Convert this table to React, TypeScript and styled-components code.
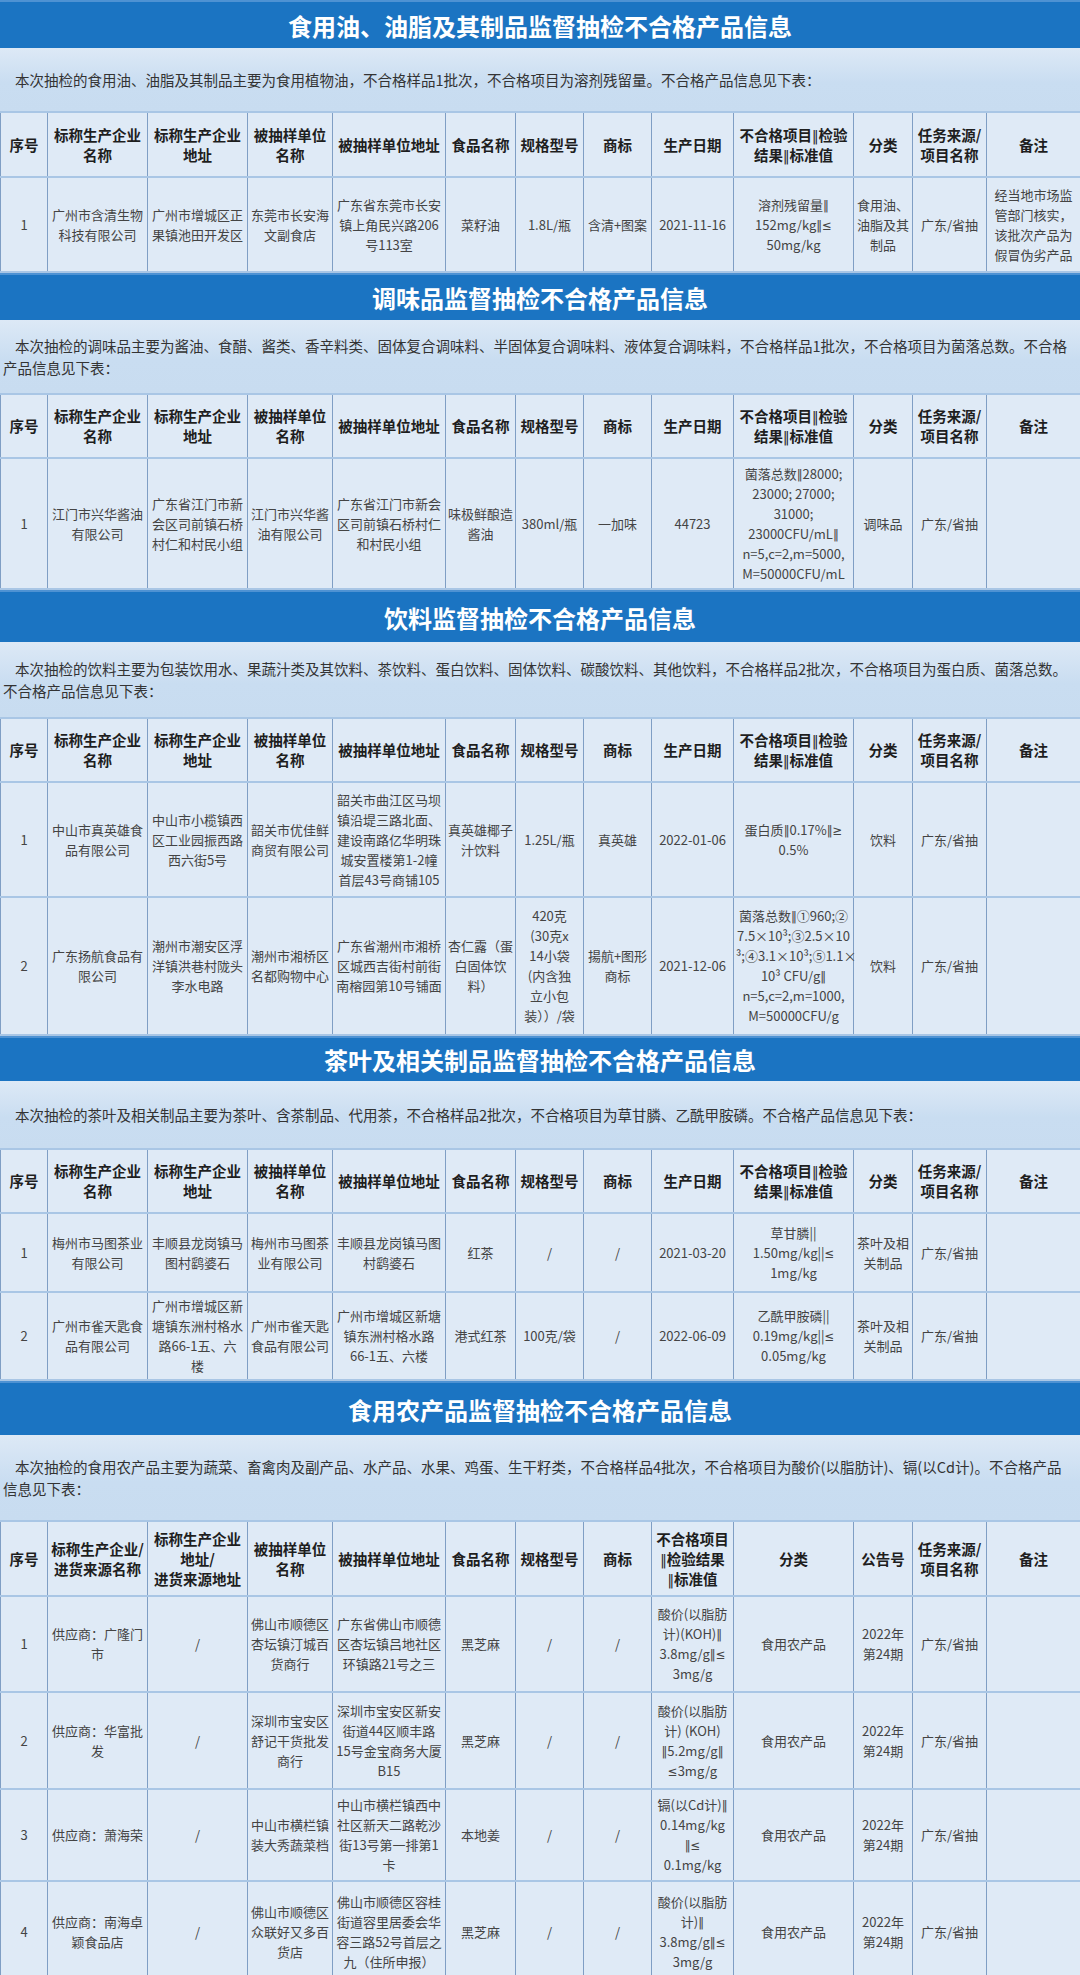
import styled, { createGlobalStyle } from 'styled-components';

const GlobalStyle = createGlobalStyle`
  html, body {
    margin: 0;
    padding: 0;
    background: #dfeaf6;
  }
  body {
    font-family: "Noto Sans CJK SC", "Noto Sans", sans-serif;
  }
`;

const COLS = [47, 100, 100, 85, 113, 70, 68, 68, 82, 120, 59, 74, 94];

const HEAD = [
  '序号',
  '标称生产企业\n名称',
  '标称生产企业\n地址',
  '被抽样单位\n名称',
  '被抽样单位地址',
  '食品名称',
  '规格型号',
  '商标',
  '生产日期',
  '不合格项目‖检验\n结果‖标准值',
  '分类',
  '任务来源/\n项目名称',
  '备注',
];

const HEAD_FARM = [
  '序号',
  '标称生产企业/\n进货来源名称',
  '标称生产企业\n地址/\n进货来源地址',
  '被抽样单位\n名称',
  '被抽样单位地址',
  '食品名称',
  '规格型号',
  '商标',
  '不合格项目\n‖检验结果\n‖标准值',
  '分类',
  '公告号',
  '任务来源/\n项目名称',
  '备注',
];

interface Section {
  title: string;
  titleH: number;
  intro: string[];
  introH: number;
  head: string[];
  headH: number;
  rows: { h: number; cells: string[] }[];
}

const SECTIONS: Section[] = [
  {
    title: '食用油、油脂及其制品监督抽检不合格产品信息',
    titleH: 48,
    intro: [
      '本次抽检的食用油、油脂及其制品主要为食用植物油，不合格样品1批次，不合格项目为溶剂残留量。不合格产品信息见下表：',
    ],
    introH: 63,
    head: HEAD,
    headH: 65,
    rows: [
      {
        h: 95,
        cells: [
          '1',
          '广州市含清生物\n科技有限公司',
          '广州市增城区正\n果镇池田开发区',
          '东莞市长安海\n文副食店',
          '广东省东莞市长安\n镇上角民兴路206\n号113室',
          '菜籽油',
          '1.8L/瓶',
          '含清+图案',
          '2021-11-16',
          '溶剂残留量‖\n152mg/kg‖≤\n50mg/kg',
          '食用油、\n油脂及其\n制品',
          '广东/省抽',
          '经当地市场监\n管部门核实，\n该批次产品为\n假冒伪劣产品',
        ],
      },
    ],
  },
  {
    title: '调味品监督抽检不合格产品信息',
    titleH: 47,
    intro: [
      '本次抽检的调味品主要为酱油、食醋、酱类、香辛料类、固体复合调味料、半固体复合调味料、液体复合调味料，不合格样品1批次，不合格项目为菌落总数。不合格',
      '产品信息见下表：',
    ],
    introH: 73,
    head: HEAD,
    headH: 64,
    rows: [
      {
        h: 131,
        cells: [
          '1',
          '江门市兴华酱油\n有限公司',
          '广东省江门市新\n会区司前镇石桥\n村仁和村民小组',
          '江门市兴华酱\n油有限公司',
          '广东省江门市新会\n区司前镇石桥村仁\n和村民小组',
          '味极鲜酿造\n酱油',
          '380ml/瓶',
          '一加味',
          '44723',
          '菌落总数‖28000;\n23000; 27000;\n31000;\n23000CFU/mL‖\nn=5,c=2,m=5000,\nM=50000CFU/mL',
          '调味品',
          '广东/省抽',
          '',
        ],
      },
    ],
  },
  {
    title: '饮料监督抽检不合格产品信息',
    titleH: 52,
    intro: [
      '本次抽检的饮料主要为包装饮用水、果蔬汁类及其饮料、茶饮料、蛋白饮料、固体饮料、碳酸饮料、其他饮料，不合格样品2批次，不合格项目为蛋白质、菌落总数。',
      '不合格产品信息见下表：',
    ],
    introH: 75,
    head: HEAD,
    headH: 64,
    rows: [
      {
        h: 115,
        cells: [
          '1',
          '中山市真英雄食\n品有限公司',
          '中山市小榄镇西\n区工业园振西路\n西六街5号',
          '韶关市优佳鲜\n商贸有限公司',
          '韶关市曲江区马坝\n镇沿堤三路北面、\n建设南路亿华明珠\n城安置楼第1-2幢\n首层43号商铺105',
          '真英雄椰子\n汁饮料',
          '1.25L/瓶',
          '真英雄',
          '2022-01-06',
          '蛋白质‖0.17%‖≥\n0.5%',
          '饮料',
          '广东/省抽',
          '',
        ],
      },
      {
        h: 138,
        cells: [
          '2',
          '广东扬航食品有\n限公司',
          '潮州市潮安区浮\n洋镇洪巷村陇头\n李水电路',
          '潮州市湘桥区\n名都购物中心',
          '广东省潮州市湘桥\n区城西吉街村前街\n南榕园第10号铺面',
          '杏仁露（蛋\n白固体饮\n料）',
          '420克\n(30克x\n14小袋\n(内含独\n立小包\n装））/袋',
          '揚航+图形\n商标',
          '2021-12-06',
          '菌落总数‖①960;②\n7.5×10³;③2.5×10\n³;④3.1×10³;⑤1.1×\n10³ CFU/g‖\nn=5,c=2,m=1000,\nM=50000CFU/g',
          '饮料',
          '广东/省抽',
          '',
        ],
      },
    ],
  },
  {
    title: '茶叶及相关制品监督抽检不合格产品信息',
    titleH: 45,
    intro: [
      '本次抽检的茶叶及相关制品主要为茶叶、含茶制品、代用茶，不合格样品2批次，不合格项目为草甘膦、乙酰甲胺磷。不合格产品信息见下表：',
    ],
    introH: 67,
    head: HEAD,
    headH: 64,
    rows: [
      {
        h: 79,
        cells: [
          '1',
          '梅州市马图茶业\n有限公司',
          '丰顺县龙岗镇马\n图村鹞婆石',
          '梅州市马图茶\n业有限公司',
          '丰顺县龙岗镇马图\n村鹞婆石',
          '红茶',
          '/',
          '/',
          '2021-03-20',
          '草甘膦||\n1.50mg/kg||≤\n1mg/kg',
          '茶叶及相\n关制品',
          '广东/省抽',
          '',
        ],
      },
      {
        h: 88,
        cells: [
          '2',
          '广州市雀天匙食\n品有限公司',
          '广州市增城区新\n塘镇东洲村格水\n路66-1五、六\n楼',
          '广州市雀天匙\n食品有限公司',
          '广州市增城区新塘\n镇东洲村格水路\n66-1五、六楼',
          '港式红茶',
          '100克/袋',
          '/',
          '2022-06-09',
          '乙酰甲胺磷||\n0.19mg/kg||≤\n0.05mg/kg',
          '茶叶及相\n关制品',
          '广东/省抽',
          '',
        ],
      },
    ],
  },
  {
    title: '食用农产品监督抽检不合格产品信息',
    titleH: 54,
    intro: [
      '本次抽检的食用农产品主要为蔬菜、畜禽肉及副产品、水产品、水果、鸡蛋、生干籽类，不合格样品4批次，不合格项目为酸价(以脂肪计)、镉(以Cd计)。不合格产品',
      '信息见下表：',
    ],
    introH: 85,
    head: HEAD_FARM,
    headH: 75,
    rows: [
      {
        h: 96,
        cells: [
          '1',
          '供应商：广隆门\n市',
          '/',
          '佛山市顺德区\n杏坛镇汀城百\n货商行',
          '广东省佛山市顺德\n区杏坛镇吕地社区\n环镇路21号之三',
          '黑芝麻',
          '/',
          '/',
          '酸价(以脂肪\n计)(KOH)‖\n3.8mg/g‖≤\n3mg/g',
          '食用农产品',
          '2022年\n第24期',
          '广东/省抽',
          '',
        ],
      },
      {
        h: 97,
        cells: [
          '2',
          '供应商：华富批\n发',
          '/',
          '深圳市宝安区\n舒记干货批发\n商行',
          '深圳市宝安区新安\n街道44区顺丰路\n15号金宝商务大厦\nB15',
          '黑芝麻',
          '/',
          '/',
          '酸价(以脂肪\n计) (KOH)\n‖5.2mg/g‖\n≤3mg/g',
          '食用农产品',
          '2022年\n第24期',
          '广东/省抽',
          '',
        ],
      },
      {
        h: 92,
        cells: [
          '3',
          '供应商：萧海荣',
          '/',
          '中山市横栏镇\n装大秀蔬菜档',
          '中山市横栏镇西中\n社区新天二路乾沙\n街13号第一排第1\n卡',
          '本地姜',
          '/',
          '/',
          '镉(以Cd计)‖\n0.14mg/kg\n‖≤\n0.1mg/kg',
          '食用农产品',
          '2022年\n第24期',
          '广东/省抽',
          '',
        ],
      },
      {
        h: 101,
        cells: [
          '4',
          '供应商：南海卓\n颖食品店',
          '/',
          '佛山市顺德区\n众联好又多百\n货店',
          '佛山市顺德区容桂\n街道容里居委会华\n容三路52号首层之\n九（住所申报）',
          '黑芝麻',
          '/',
          '/',
          '酸价(以脂肪\n计)‖\n3.8mg/g‖≤\n3mg/g',
          '食用农产品',
          '2022年\n第24期',
          '广东/省抽',
          '',
        ],
      },
    ],
  },
];

// the CJK font draws ‖ ≤ ≥ full width; the reference has them narrow
const CellText = ({ text }: { text: string }) => (
  <>
    {text.split('\n').map((line, li) => (
      <Line key={li}>
        {line.split(/([‖≤≥])/).map((part, i) =>
          /^[‖≤≥]$/.test(part) ? <Sym key={i}>{part}</Sym> : part
        )}
      </Line>
    ))}
  </>
);

const App = () => {
  return (
    <Page>
      <GlobalStyle />
      {SECTIONS.map((s) => (
        <Block key={s.title}>
          <SectionTitle $h={s.titleH}>{s.title}</SectionTitle>
          <Intro $h={s.introH}>
            {s.intro.map((line, i) => (
              <IntroLine key={i} $first={i === 0}>
                {line}
              </IntroLine>
            ))}
          </Intro>
          <Table>
            <colgroup>
              {COLS.map((w, i) => (
                <col key={i} style={{ width: w }} />
              ))}
            </colgroup>
            <thead>
              <Row $h={s.headH}>
                {s.head.map((h, i) => (
                  <HeadCell key={i}>
                    <CellText text={h} />
                  </HeadCell>
                ))}
              </Row>
            </thead>
            <tbody>
              {s.rows.map((r, ri) => (
                <Row key={ri} $h={r.h}>
                  {r.cells.map((c, ci) => (
                    <Cell key={ci}>
                      <CellText text={c} />
                    </Cell>
                  ))}
                </Row>
              ))}
            </tbody>
          </Table>
        </Block>
      ))}
    </Page>
  );
};

export default App;

const Page = styled.div`
  width: 1080px;
  height: 1975px;
  overflow: hidden;
  background: #dfeaf6;
`;

const Block = styled.section`
  display: flex;
  flex-direction: column;
`;

const SectionTitle = styled.div<{ $h: number }>`
  height: ${(p) => p.$h}px;
  box-sizing: border-box;
  display: flex;
  align-items: center;
  justify-content: center;
  background: #1b74c2;
  border-top: 2px solid #4e92d3;
  color: #ffffff;
  font-size: 24px;
  font-weight: 700;
`;

const Intro = styled.div<{ $h: number }>`
  height: ${(p) => p.$h}px;
  box-sizing: border-box;
  display: flex;
  flex-direction: column;
  justify-content: center;
  padding: 0 3px;
  background: linear-gradient(180deg, #dde9f6 0%, #c9ddf1 55%, #c8dcf0 100%);
  color: #333333;
  font-size: 14.5px;
  line-height: 22px;
`;

const IntroLine = styled.div<{ $first?: boolean }>`
  white-space: nowrap;
  padding-left: ${(p) => (p.$first ? 12 : 0)}px;
`;

const Table = styled.table`
  width: 1080px;
  table-layout: fixed;
  border-collapse: collapse;
  background: #dfeaf6;
`;

const Row = styled.tr<{ $h: number }>`
  height: ${(p) => p.$h}px;
`;

const HeadCell = styled.th`
  padding: 0 2px;
  border-left: 1px solid #7f9ec4;
  border-right: 1px solid #7f9ec4;
  border-top: 2px solid #a9c6e5;
  border-bottom: 2px solid #a9c6e5;
  font-size: 14.5px;
  font-weight: 700;
  line-height: 20px;
  color: #1e1e1e;
  text-align: center;
  vertical-align: middle;
`;

const Cell = styled.td`
  padding: 0 2px;
  border-left: 1px solid #7f9ec4;
  border-right: 1px solid #7f9ec4;
  border-top: 2px solid #a9c6e5;
  border-bottom: 2px solid #a9c6e5;
  font-size: 13px;
  line-height: 20px;
  color: #444444;
  text-align: center;
  vertical-align: middle;
`;

const Line = styled.div`
  white-space: nowrap;
  height: 20px;
`;

const Sym = styled.span`
  font-family: "DejaVu Sans Condensed", "DejaVu Sans", sans-serif;
  font-weight: 400;
`;
